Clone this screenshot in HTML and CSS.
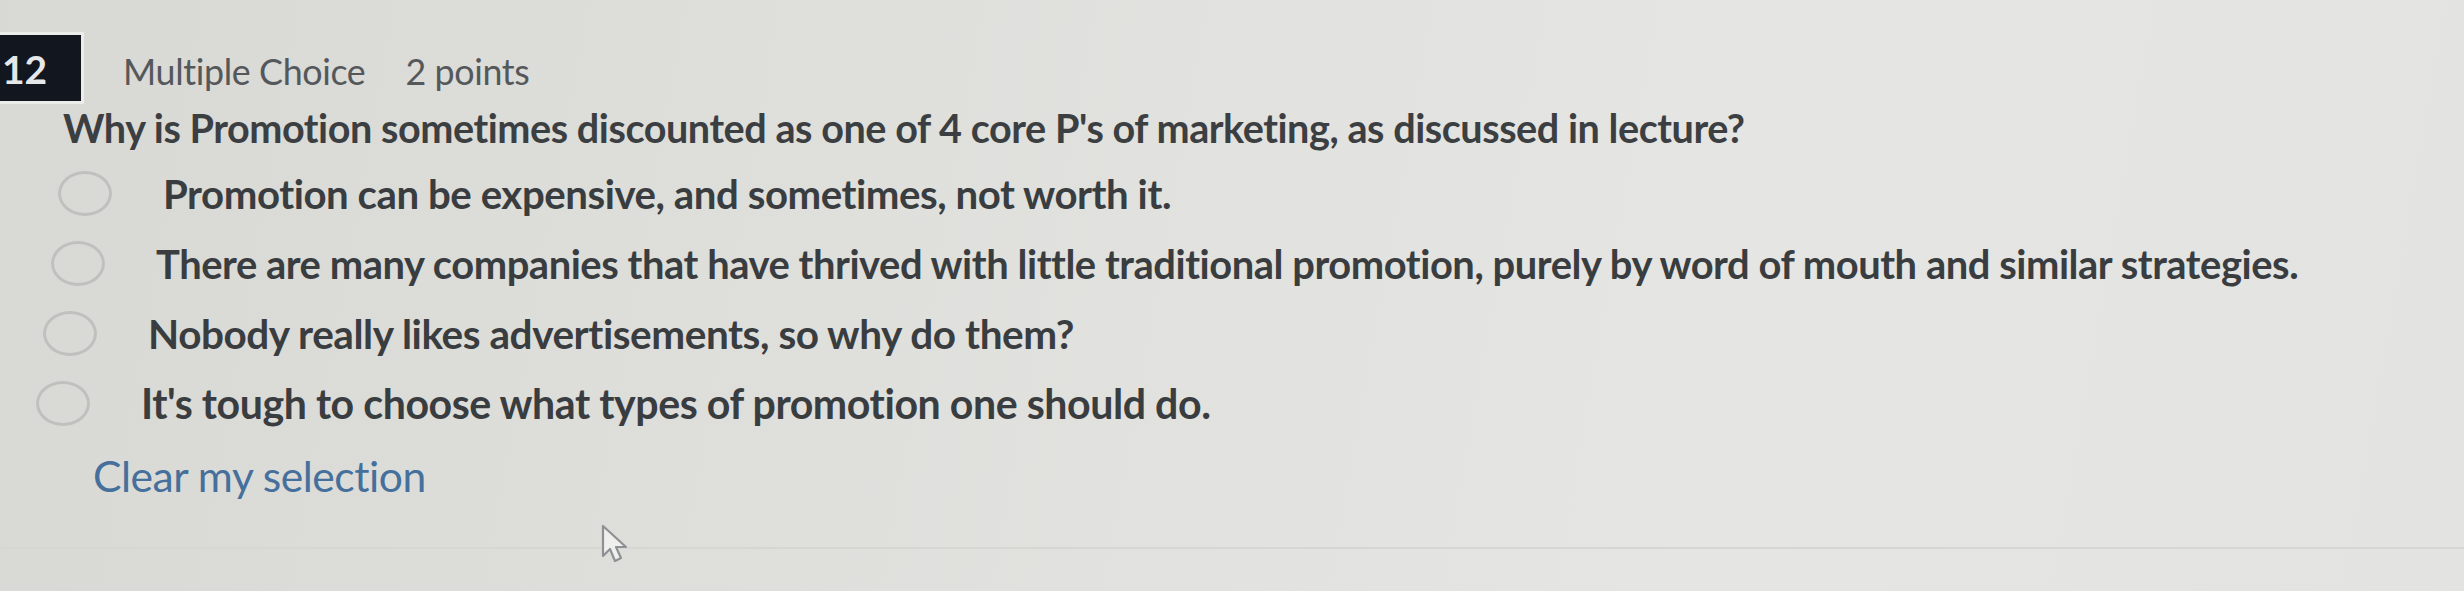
FILE: index.html
```html
<!DOCTYPE html>
<html lang="en">
<head>
<meta charset="utf-8">
<title>Question 12</title>
<link rel="stylesheet" href="styles.css">
</head>
<body>
<div class="page">
  <div class="header">
    <div class="badge"><span class="num">12</span></div>
    <div class="meta">
      <span class="type">Multiple Choice</span>
      <span class="points">2 points</span>
    </div>
  </div>
  <div class="question">Why is Promotion sometimes discounted as one of 4 core P's of marketing, as discussed in lecture?</div>
  <div class="options">
    <label class="option"><span class="radio"></span><span class="text">Promotion can be expensive, and sometimes, not worth it.</span></label>
    <label class="option"><span class="radio"></span><span class="text">There are many companies that have thrived with little traditional promotion, purely by word of mouth and similar strategies.</span></label>
    <label class="option"><span class="radio"></span><span class="text">Nobody really likes advertisements, so why do them?</span></label>
    <label class="option"><span class="radio"></span><span class="text">It's tough to choose what types of promotion one should do.</span></label>
  </div>
  <div class="clear">Clear my selection</div>
  <div class="divider"></div>
  <svg class="cursor" width="34" height="44" viewBox="0 0 34 44" aria-hidden="true">
    <path d="M3 3 L3 33 L10 26 L15 38 L21 35 L16 24 L26 24 Z" fill="#efefed" stroke="#8e9194" stroke-width="2.2" stroke-linejoin="round"/>
  </svg>
</div>
</body>
</html>
```
FILE: styles.css
```css
html, body {
  margin: 0;
  padding: 0;
}
body {
  width: 2464px;
  height: 591px;
  overflow: hidden;
  font-family: Lato, "Open Sans", sans-serif;
  background: linear-gradient(100deg, #d8d8d4 0%, #dfdfdc 35%, #e5e5e3 70%, #e3e3e1 100%);
}
.page {
  position: relative;
  height: 591px;
  display: flex;
  flex-direction: column;
}
.header {
  display: flex;
  align-items: center;
  margin-top: 35px;
  height: 66px;
}
.badge {
  width: 81px;
  height: 66px;
  box-sizing: border-box;
  background: #12171f;
  color: #e6e7e8;
  font-weight: 700;
  font-size: 39px;
  display: flex;
  align-items: center;
  padding-left: 2px;
  padding-top: 2px;
  box-shadow: 0 0 0 3px #ecece9;
}
.meta {
  display: flex;
  gap: 40px;
  margin-left: 42px;
  margin-top: 6px;
  font-size: 35.8px;
  color: #55585b;
  letter-spacing: -0.36px;
}
.question {
  margin-top: 5px;
  padding-left: 63px;
  font-size: 39.6px;
  font-weight: 700;
  color: #3c3f42;
  letter-spacing: -0.45px;
  line-height: 44px;
}
.options {
  display: flex;
  flex-direction: column;
  margin-top: 21px;
  gap: 26px;
}
.option {
  display: flex;
  align-items: center;
  height: 44px;
  color: #3a3d40;
  font-weight: 700;
  letter-spacing: -0.45px;
}
.option:nth-child(1) { padding-left: 58px; font-size: 40.2px; }
.option:nth-child(2) { padding-left: 51px; font-size: 39.9px; }
.option:nth-child(3) { padding-left: 43px; font-size: 40.5px; }
.option:nth-child(4) { padding-left: 36px; font-size: 41.1px; }
.radio {
  width: 54px;
  height: 45px;
  box-sizing: border-box;
  border: 3px solid #c0c0be;
  border-radius: 50%;
  background: transparent;
  flex: none;
}
.text {
  margin-left: 51px;
}
.clear {
  margin-top: 27px;
  padding-left: 93px;
  font-size: 42.6px;
  line-height: 48px;
  color: #46709c;
  letter-spacing: -0.47px;
}
.divider {
  margin-top: 47px;
  height: 2px;
  background: #d6d6d3;
}
.cursor {
  position: absolute;
  left: 600px;
  top: 523px;
}
```
